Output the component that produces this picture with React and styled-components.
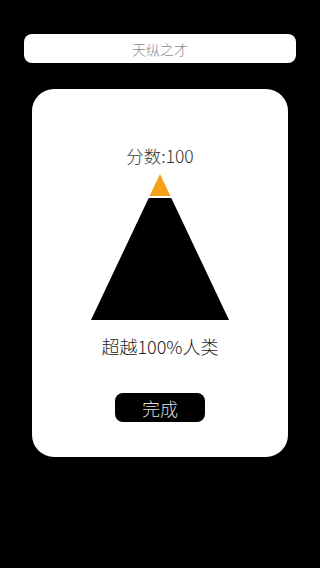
import React from 'react';
import styled, { createGlobalStyle } from 'styled-components';

const GlobalStyle = createGlobalStyle`
  html, body {
    margin: 0;
    padding: 0;
    background: #000;
  }
  body {
    font-family: "Noto Sans CJK SC", "Noto Sans", sans-serif;
  }
`;

export default function App() {
  return (
    <>
      <GlobalStyle />
      <Screen>
        <TitleBar>天纵之才</TitleBar>
        <Card>
          <Score>分数:100</Score>
          <Mountain width="138" height="146" viewBox="0 0 138 146">
            <polygon points="69,0 79.4,22 58.6,22" fill="#f7a01a" />
            <polygon points="57.7,24 80.3,24 138,146 0,146" fill="#000" />
          </Mountain>
          <Beat>超越100%人类</Beat>
          <DoneButton>完成</DoneButton>
        </Card>
      </Screen>
    </>
  );
}

const Screen = styled.div`
  width: 320px;
  min-height: 568px;
  background: #000;
  display: flex;
  flex-direction: column;
  align-items: center;
  padding-top: 34px;
  box-sizing: border-box;
`;

const TitleBar = styled.div`
  width: 272px;
  height: 29px;
  background: #fff;
  border-radius: 8px;
  display: flex;
  align-items: center;
  justify-content: center;
  color: #8a8a8a;
  font-size: 14px;
  font-weight: 300;
`;

const Card = styled.div`
  margin-top: 26px;
  width: 256px;
  height: 368px;
  background: #fff;
  border-radius: 22px;
  display: flex;
  flex-direction: column;
  align-items: center;
  padding-top: 57px;
  box-sizing: border-box;
`;

const Score = styled.div`
  font-size: 17.5px;
  line-height: 20px;
  color: #333;
  font-weight: 300;
`;

const Mountain = styled.svg`
  display: block;
  margin-top: 8px;
`;

const Beat = styled.div`
  margin-top: 16px;
  font-size: 18px;
  line-height: 20px;
  color: #222;
  font-weight: 300;
`;

const DoneButton = styled.button`
  margin-top: 37px;
  width: 90px;
  height: 29px;
  border: none;
  border-radius: 8px;
  background: #000;
  color: #ddd;
  font-family: inherit;
  font-size: 18px;
  font-weight: 300;
  padding: 0;
  cursor: pointer;
`;
